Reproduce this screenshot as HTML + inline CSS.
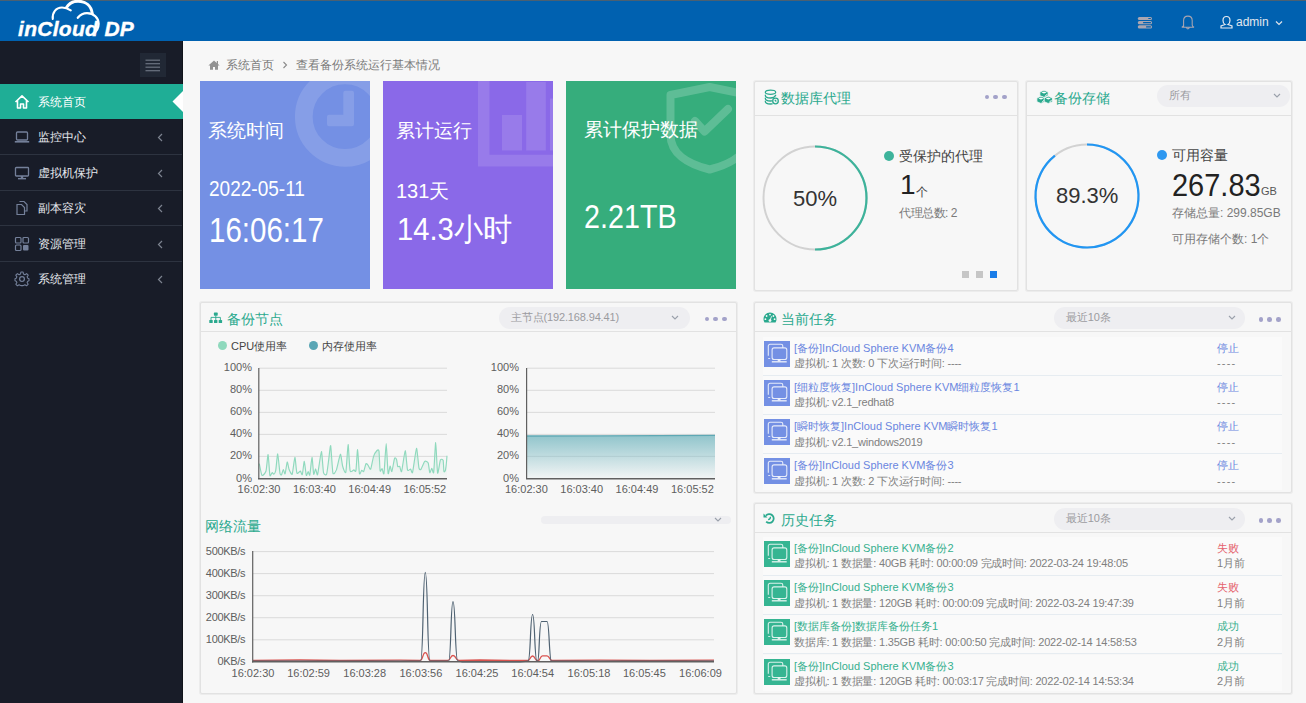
<!DOCTYPE html>
<html><head><meta charset="utf-8"><style>
*{margin:0;padding:0;box-sizing:border-box}
html,body{width:1306px;height:703px;overflow:hidden;background:#f7f7f7;font-family:"Liberation Sans",sans-serif;position:relative}
.a{position:absolute;white-space:nowrap}
.menu{position:absolute;left:0;width:182px;height:35px;color:#e4e7ec;font-size:12px;line-height:35px}
.menu .t{position:absolute;left:38px;top:1px}
.menu .ar{position:absolute;left:156px;top:1px;width:8px;height:35px}
.menu svg.ic{position:absolute;left:14px;top:10px}
.sep{position:absolute;left:0;width:182px;height:1px;background:#2d3340}
.card{position:absolute;top:81px;width:170px;height:208px;overflow:hidden;color:#fff}
.panel{position:absolute;background:#f7f7f7;border:1px solid #e2e2e2;box-shadow:0 0 0 1px #ececec;border-radius:2px}
.hsep{position:absolute;height:1px;background:#e2e2e2}
.ptitle{position:absolute;color:#2aa98e;font-size:14px;line-height:16px;white-space:nowrap}
.dot{position:absolute;width:4.6px;height:4.6px;border-radius:50%;background:#a3a2c9}
.sel{position:absolute;background:#eeeef1;border-radius:11px;color:#9a9a9a;font-size:11px}
.row{position:absolute;left:763px;width:519px;height:39px;background:#fafafa;border-bottom:1px solid #e6ecf1}
.ico{position:absolute;left:1px;width:26px;height:26px}
.rt{position:absolute;left:31px;font-size:11px;line-height:13px;white-space:nowrap}
.rs{position:absolute;left:31px;font-size:11px;line-height:13px;color:#808080;white-space:nowrap;letter-spacing:-0.2px}
.st{position:absolute;left:454px;font-size:11px;line-height:13px;white-space:nowrap}
.lbl{position:absolute;font-size:11px;color:#5e5e5e;line-height:12px;white-space:nowrap}
</style></head><body>
<div class="a" style="left:0;top:0;width:1306px;height:1px;background:#4a6072"></div>
<div class="a" style="left:0;top:1px;width:1306px;height:40px;background:#0061b0"></div>
<div class="a" style="left:18px;top:17px;font:italic bold 21px 'Liberation Sans',sans-serif;color:#fff;line-height:24px;letter-spacing:0.3px;-webkit-text-stroke:0.4px #fff">inCloud DP</div>
<svg class="a" style="left:0;top:0" width="120" height="41" viewBox="0 0 120 41">
 <path d="M52.8,19 C52,12.5 56,7.5 62,7.5 C65.5,7.5 68.5,8.8 70.8,10.3" fill="none" stroke="#fff" stroke-width="2.1" stroke-linecap="round"/>
 <path d="M66.5,7.5 C69,3.2 73,1.2 78,1.2 C85.5,1.2 91.2,5.5 92.3,13.5" fill="none" stroke="#fff" stroke-width="2.9" stroke-linecap="round"/>
 <path d="M77.8,17.8 C80.5,14.6 83.5,13.2 87,13.2 C93.8,13.2 98.6,17.8 98.6,23.8 C98.6,27.8 96.8,31 93.6,33.6" fill="none" stroke="#fff" stroke-width="2.3" stroke-linecap="round"/>
</svg>
<svg class="a" style="left:1130px;top:5px" width="160" height="35" viewBox="1130 5 160 35">
 <g fill="#aaa6b1"><rect x="1137.8" y="16.9" width="14.2" height="3.1" rx="1.5"/><rect x="1137.8" y="21.1" width="14.2" height="3.1" rx="1.5"/><rect x="1137.8" y="25.3" width="14.2" height="3.1" rx="1.5"/></g>
 <g fill="#0061b0"><rect x="1148.2" y="17.9" width="2.8" height="1.1" rx="0.5"/><rect x="1143" y="22.1" width="8" height="1.1" rx="0.5"/><rect x="1146" y="26.3" width="5" height="1.1" rx="0.5"/></g>
 <path d="M1183.6,26.8 L1183.6,20.5 C1183.6,17.6 1185.5,16.1 1187.9,16.1 C1190.3,16.1 1192.2,17.6 1192.2,20.5 L1192.2,25 C1192.2,26 1193,26.8 1194,27.3 L1181.8,27.3 C1182.8,26.8 1183.6,26 1183.6,25 Z M1186.6,27.6 A1.3,1.3 0 0 0 1189.2,27.6" fill="none" stroke="#aaa6b1" stroke-width="1.05"/>
 <path d="M1226.5,16.5 C1224,16.5 1223,18.5 1223,20.5 C1223,22.5 1224,24 1225,24.5 L1221,26 L1221,28 L1232,28 L1232,26 L1228,24.5 C1229,24 1230,22.5 1230,20.5 C1230,18.5 1229,16.5 1226.5,16.5 Z" fill="none" stroke="#e6eaf0" stroke-width="1.2"/>
 <path d="M1276,21.5 L1279,24.5 L1282,21.5" fill="none" stroke="#dfe4ea" stroke-width="1.2"/>
</svg>
<div class="a" style="left:1236px;top:15px;font-size:12px;line-height:14px;color:#e3e7ee">admin</div>
<div class="a" style="left:0;top:41px;width:182px;height:662px;background:#181c28"></div>
<div class="a" style="left:182px;top:41px;width:1px;height:662px;background:#10131a"></div>
<div class="a" style="left:140px;top:53px;width:26px;height:24px;background:#212835"></div>
<svg class="a" style="left:140px;top:53px" width="26" height="24"><g fill="#6b7381"><rect x="5.5" y="6.6" width="14.5" height="1.2"/><rect x="5.5" y="10.1" width="14.5" height="1.2"/><rect x="5.5" y="13.6" width="14.5" height="1.2"/><rect x="5.5" y="17.1" width="14.5" height="1.2"/></g></svg>
<div class="menu" style="top:84px;width:183px;background:#1fae96;color:#fff"><svg class="ic" width="16" height="16" viewBox="0 0 16 16"><path d="M1.5,8 L8,1.8 L14.5,8 M3.5,6.5 L3.5,14 L6.5,14 L6.5,10 L9.5,10 L9.5,14 L12.5,14 L12.5,6.5" fill="none" stroke="#fff" stroke-width="1.6" stroke-linejoin="round"/></svg><span class="t">系统首页</span></div>
<svg class="a" style="left:172px;top:84px" width="11" height="35"><path d="M11,7 L0.5,17.5 L11,28 Z" fill="#fff"/></svg>
<div class="menu" style="top:119px"><svg class="ic" width="16" height="16" viewBox="0 0 16 16"><rect x="2.5" y="3" width="11" height="8" rx="1" fill="none" stroke="#74809a" stroke-width="1.3"/><rect x="0.8" y="12" width="14.4" height="1.6" fill="#74809a"/></svg><span class="t">监控中心</span><svg class="ar" width="8" height="35"><path d="M6,14 L2.5,17.5 L6,21" fill="none" stroke="#7d8390" stroke-width="1.2"/></svg></div>
<div class="sep" style="top:154px"></div>
<div class="menu" style="top:155px"><svg class="ic" width="16" height="16" viewBox="0 0 16 16"><rect x="1.5" y="2.5" width="13" height="8.5" rx="0.8" fill="none" stroke="#74809a" stroke-width="1.3"/><rect x="6.8" y="11" width="2.4" height="2" fill="#74809a"/><rect x="4" y="13" width="8" height="1.4" fill="#74809a"/></svg><span class="t">虚拟机保护</span><svg class="ar" width="8" height="35"><path d="M6,14 L2.5,17.5 L6,21" fill="none" stroke="#7d8390" stroke-width="1.2"/></svg></div>
<div class="sep" style="top:190px"></div>
<div class="menu" style="top:190px"><svg class="ic" width="16" height="16" viewBox="0 0 16 16"><path d="M5.5,1.5 L10,1.5 L13,4.5 L13,11 L11,11 M3,4.5 L7.5,4.5 L10.5,7.5 L10.5,14.5 L3,14.5 Z" fill="none" stroke="#74809a" stroke-width="1.2"/></svg><span class="t">副本容灾</span><svg class="ar" width="8" height="35"><path d="M6,14 L2.5,17.5 L6,21" fill="none" stroke="#7d8390" stroke-width="1.2"/></svg></div>
<div class="sep" style="top:225px"></div>
<div class="menu" style="top:226px"><svg class="ic" width="16" height="16" viewBox="0 0 16 16"><g fill="none" stroke="#74809a" stroke-width="1.2"><rect x="1.5" y="1.5" width="5.5" height="5.5" rx="1"/><rect x="9" y="1.5" width="5.5" height="5.5" rx="1"/><rect x="1.5" y="9" width="5.5" height="5.5" rx="1"/></g><rect x="9" y="9" width="5.5" height="5.5" rx="1" fill="#74809a"/></svg><span class="t">资源管理</span><svg class="ar" width="8" height="35"><path d="M6,14 L2.5,17.5 L6,21" fill="none" stroke="#7d8390" stroke-width="1.2"/></svg></div>
<div class="sep" style="top:261px"></div>
<div class="menu" style="top:261px"><svg class="ic" width="16" height="16" viewBox="0 0 16 16"><path d="M6.9,1.2 L9.1,1.2 L9.5,3.2 L10.9,3.9 L12.6,2.8 L14.2,4.4 L13.1,6.1 L13.8,7.5 L15,7.9 L15,10.1 L13.8,10.5 L13.1,11.9 L14.2,13.6 L12.6,15.2 L10.9,14.1 L9.5,14.8 L9.1,15 L6.9,15 L6.5,14.8 L5.1,14.1 L3.4,15.2 L1.8,13.6 L2.9,11.9 L2.2,10.5 L1,10.1 L1,7.9 L2.2,7.5 L2.9,6.1 L1.8,4.4 L3.4,2.8 L5.1,3.9 L6.5,3.2 Z" transform="translate(0,-0.1) scale(1,0.98)" fill="none" stroke="#74809a" stroke-width="1.1" stroke-linejoin="round"/><circle cx="8" cy="8.1" r="2.4" fill="none" stroke="#74809a" stroke-width="1.2"/></svg><span class="t">系统管理</span><svg class="ar" width="8" height="35"><path d="M6,14 L2.5,17.5 L6,21" fill="none" stroke="#7d8390" stroke-width="1.2"/></svg></div>
<svg class="a" style="left:208px;top:60px" width="12" height="11" viewBox="0 0 12 11"><path d="M6,0.5 L8.8,3 L8.8,1 L10,1 L10,4.1 L11.6,5.6 L10,5.6 L10,9.8 L7,9.8 L7,7 L5,7 L5,9.8 L2,9.8 L2,5.6 L0.4,5.6 Z" fill="#929292"/></svg>
<div class="a" style="left:226px;top:57px;font-size:12px;line-height:16px;color:#7a7a7a">系统首页</div>
<svg class="a" style="left:281px;top:59px" width="8" height="12"><path d="M2.5,3 L5.5,6 L2.5,9" fill="none" stroke="#8a8a8a" stroke-width="1.1"/></svg>
<div class="a" style="left:296px;top:57px;font-size:12px;line-height:16px;color:#7a7a7a">查看备份系统运行基本情况</div>
<div class="card" style="left:200px;background:#7490e4">
<svg class="a" style="left:0;top:0" width="170" height="208"><circle cx="145" cy="35.7" r="41.2" fill="none" stroke="rgba(255,255,255,0.13)" stroke-width="17.7"/><path d="M145.3,9.7 L152,9.7 Q154,9.7 154,11.7 L154,43.2 Q154,45.2 152,45.2 L129,45.2 Q127,45.2 127,43.2 L127,35.8 Q127,33.8 129,33.8 L143.3,33.8 L143.3,11.7 Q143.3,9.7 145.3,9.7 Z" fill="rgba(255,255,255,0.13)"/></svg>
<div class="a" style="left:8px;top:38px;font-size:19px;line-height:24px">系统时间</div>
<div class="a" style="left:8.5px;top:95px;font-size:21.5px;line-height:26px;transform:scaleX(0.885);transform-origin:0 0">2022-05-11</div>
<div class="a" style="left:9px;top:128.5px;font-size:34.5px;line-height:40px;transform:scaleX(0.855);transform-origin:0 0">16:06:17</div>
</div>
<div class="card" style="left:383px;background:#8a69e8">
<svg class="a" style="left:0;top:0" width="170" height="208"><g fill="rgba(255,255,255,0.12)"><path d="M95,0 L106.5,0 L106.5,73.7 L170,73.7 L170,85.5 L95,85.5 Z"/><rect x="119" y="34" width="20" height="35.5"/><rect x="143.2" y="1" width="19.6" height="68.5"/><rect x="167" y="17.5" width="10" height="52"/></g></svg>
<div class="a" style="left:13px;top:38px;font-size:19px;line-height:24px">累计运行</div>
<div class="a" style="left:13px;top:98px;font-size:20px;line-height:24px">131天</div>
<div class="a" style="left:14px;top:130px;font-size:31px;line-height:38px;transform:scaleX(0.94);transform-origin:0 0">14.3小时</div>
</div>
<div class="card" style="left:566px;background:#36ad7c">
<svg class="a" style="left:0;top:0" width="170" height="208"><path d="M143.7,6 L183,14 L183,54 C183,72 166,83 143.7,88.5 C121,83 104.5,72 104.5,54 L104.5,14 Z" fill="none" stroke="rgba(255,255,255,0.2)" stroke-width="8" stroke-linejoin="round"/>
<path d="M129,40 L138.5,50.5 L162,28" fill="none" stroke="rgba(255,255,255,0.2)" stroke-width="8" stroke-linecap="round" stroke-linejoin="round"/></svg>
<div class="a" style="left:18px;top:37px;font-size:19px;line-height:24px">累计保护数据</div>
<div class="a" style="left:18px;top:116.5px;font-size:33px;line-height:38px;transform:scaleX(0.87);transform-origin:0 0">2.21TB</div>
</div>
<div class="panel" style="left:754px;top:81px;width:264px;height:210px"></div>
<div class="hsep" style="left:755px;top:115px;width:262px"></div>
<svg class="a" style="left:764px;top:89px" width="16" height="16" viewBox="0 0 16 16"><g fill="none" stroke="#2aa98e" stroke-width="1.3" stroke-linecap="round"><ellipse cx="6.5" cy="3.2" rx="5.2" ry="2.1"/><path d="M1.3,6.2 C1.3,8 3.6,9 6.5,9 C8.6,9 10.6,8.6 11.7,6.3"/><path d="M1.3,9.2 C1.3,11 3.6,12 6.5,12 L7.8,11.9"/><path d="M1.3,12.2 C1.3,14 3.6,15 6.5,15 L8.2,14.9"/><circle cx="11.5" cy="12" r="2.8"/></g><path d="M10.8,10.8 L12.3,12.5" stroke="#2aa98e" stroke-width="1.2"/></svg>
<div class="ptitle" style="left:781px;top:90px">数据库代理</div>
<div class="dot" style="left:984.6px;top:94.6px"></div>
<div class="dot" style="left:993.3px;top:94.6px"></div>
<div class="dot" style="left:1002.0px;top:94.6px"></div>
<svg class="a" style="left:754px;top:140px" width="120" height="120" viewBox="754 140 120 120">
<circle cx="815" cy="198" r="51.5" fill="none" stroke="#d2d2d2" stroke-width="2"/>
<path d="M815,146.5 A51.5,51.5 0 0 1 815,249.5" fill="none" stroke="#3db39b" stroke-width="2.2"/></svg>
<div class="a" style="left:793px;top:186px;font-size:22px;line-height:26px;color:#333">50%</div>
<div class="a" style="left:884px;top:151px;width:10px;height:10px;border-radius:50%;background:#3db39b"></div>
<div class="a" style="left:899px;top:148px;font-size:14px;line-height:16px;color:#444">受保护的代理</div>
<div class="a" style="left:900px;top:168.5px;font-size:28px;line-height:32px;color:#222">1</div>
<div class="a" style="left:916px;top:184.5px;font-size:12px;line-height:14px;color:#444">个</div>
<div class="a" style="left:899px;top:206px;font-size:12px;line-height:14px;color:#7a7a7a;letter-spacing:-0.5px">代理总数: 2</div>
<div class="a" style="left:962px;top:271px;width:7px;height:7px;background:#c6c6c6"></div>
<div class="a" style="left:976px;top:271px;width:7px;height:7px;background:#c6c6c6"></div>
<div class="a" style="left:990px;top:271px;width:7px;height:7px;background:#1a7de8"></div>
<div class="panel" style="left:1026px;top:81px;width:266px;height:210px"></div>
<div class="hsep" style="left:1027px;top:115px;width:264px"></div>
<svg class="a" style="left:1036px;top:89px" width="18" height="16" viewBox="0 0 18 16"><path d="M8,1.1999999999999997 L12.1,3.0 L12.1,6.699999999999999 L8,8.5 L3.9000000000000004,6.699999999999999 L3.9000000000000004,3.0 Z" fill="#2aa98e" stroke="#f7f7f7" stroke-width="0.8"/><path d="M8,2.4 L10.6,3.5 L8,4.6 L5.4,3.5 Z" fill="#fff"/><path d="M9,7.4 L11.2,5.1" stroke="#fff" stroke-width="1"/><path d="M5,7.200000000000001 L9.1,9.0 L9.1,12.700000000000001 L5,14.5 L0.9000000000000004,12.700000000000001 L0.9000000000000004,9.0 Z" fill="#2aa98e" stroke="#f7f7f7" stroke-width="0.8"/><path d="M5,8.4 L7.6,9.5 L5,10.600000000000001 L2.4,9.5 Z" fill="#fff"/><path d="M6,13.4 L8.2,11.100000000000001" stroke="#fff" stroke-width="1"/><path d="M12.3,7.200000000000001 L16.4,9.0 L16.4,12.700000000000001 L12.3,14.5 L8.200000000000001,12.700000000000001 L8.200000000000001,9.0 Z" fill="#2aa98e" stroke="#f7f7f7" stroke-width="0.8"/><path d="M12.3,8.4 L14.9,9.5 L12.3,10.600000000000001 L9.700000000000001,9.5 Z" fill="#fff"/><path d="M13.3,13.4 L15.5,11.100000000000001" stroke="#fff" stroke-width="1"/></svg>
<div class="ptitle" style="left:1054px;top:90px">备份存储</div>
<div class="sel" style="left:1157px;top:85px;width:133px;height:22px"></div>
<div class="a" style="left:1169px;top:89px;font-size:11px;line-height:13px;color:#9b9b9f;letter-spacing:-0.15px">所有</div>
<svg class="a" style="left:1273px;top:93.0px" width="8" height="6"><path d="M1,1 L4,4 L7,1" fill="none" stroke="#9aa0ab" stroke-width="1.1"/></svg>
<svg class="a" style="left:1026px;top:136px" width="125" height="125" viewBox="1026 136 125 125">
<circle cx="1087" cy="196" r="51.5" fill="none" stroke="#d2d2d2" stroke-width="2"/>
<path d="M1087,144.5 A51.5,51.5 0 1 1 1054.93,155.71" fill="none" stroke="#2196f3" stroke-width="2.2"/></svg>
<div class="a" style="left:1056px;top:183px;font-size:22px;line-height:26px;color:#333">89.3%</div>
<div class="a" style="left:1157px;top:150px;width:10px;height:10px;border-radius:50%;background:#2e98f0"></div>
<div class="a" style="left:1172px;top:147px;font-size:14px;line-height:16px;color:#444">可用容量</div>
<div class="a" style="left:1172px;top:168px;font-size:30.5px;line-height:34px;color:#222;transform:scaleX(0.95);transform-origin:0 0">267.83</div>
<div class="a" style="left:1261px;top:185px;font-size:11px;line-height:13px;color:#555">GB</div>
<div class="a" style="left:1172px;top:206px;font-size:12px;line-height:15px;color:#7a7a7a;letter-spacing:0px">存储总量: 299.85GB</div>
<div class="a" style="left:1172px;top:232px;font-size:12px;line-height:15px;color:#7a7a7a;letter-spacing:0px">可用存储个数: 1个</div>
<div class="panel" style="left:200px;top:302px;width:537px;height:392px"></div>
<div class="hsep" style="left:201px;top:331px;width:535px"></div>
<svg class="a" style="left:209px;top:312px" width="14" height="12" viewBox="0 0 14 12"><g fill="#2aa98e"><rect x="4.9" y="0.6" width="3.8" height="3.1" rx="0.6"/><rect x="0.3" y="8" width="3.4" height="3" rx="0.6"/><rect x="5" y="8" width="3.4" height="3" rx="0.6"/><rect x="9.7" y="8" width="3.4" height="3" rx="0.6"/></g><g fill="none" stroke="#2aa98e" stroke-width="0.9"><path d="M6.8,3.6 L6.8,8 M2,8 L2,5.4 L11.4,5.4 L11.4,8"/></g></svg>
<div class="ptitle" style="left:227px;top:311px">备份节点</div>
<div class="sel" style="left:499px;top:307px;width:191px;height:22px"></div>
<div class="a" style="left:511px;top:311px;font-size:11px;line-height:13px;color:#9b9b9f;letter-spacing:-0.15px">主节点(192.168.94.41)</div>
<svg class="a" style="left:671px;top:315.0px" width="8" height="6"><path d="M1,1 L4,4 L7,1" fill="none" stroke="#9aa0ab" stroke-width="1.1"/></svg>
<div class="dot" style="left:704.6px;top:316.6px"></div>
<div class="dot" style="left:713.3px;top:316.6px"></div>
<div class="dot" style="left:722.0px;top:316.6px"></div>
<div class="a" style="left:218px;top:341px;width:9px;height:9px;border-radius:50%;background:#8fd9bd"></div>
<div class="a" style="left:231px;top:340px;font-size:11px;line-height:13px;color:#444">CPU使用率</div>
<div class="a" style="left:309px;top:341px;width:9px;height:9px;border-radius:50%;background:#5aa6b5"></div>
<div class="a" style="left:322px;top:340px;font-size:11px;line-height:13px;color:#444">内存使用率</div>
<svg class="a" style="left:0;top:0" width="1306" height="703" viewBox="0 0 1306 703">
<defs><linearGradient id="gcpu" x1="0" y1="0" x2="0" y2="1"><stop offset="0" stop-color="#8fd9bd" stop-opacity="0.35"/><stop offset="1" stop-color="#8fd9bd" stop-opacity="0.02"/></linearGradient>
<linearGradient id="gmem" x1="0" y1="0" x2="0" y2="1"><stop offset="0" stop-color="#7fbcc4" stop-opacity="0.85"/><stop offset="1" stop-color="#7fbcc4" stop-opacity="0.05"/></linearGradient></defs>
<line x1="259" y1="456.4" x2="447" y2="456.4" stroke="#dadada" stroke-width="1"/>
<line x1="259" y1="434.4" x2="447" y2="434.4" stroke="#dadada" stroke-width="1"/>
<line x1="259" y1="412.4" x2="447" y2="412.4" stroke="#dadada" stroke-width="1"/>
<line x1="259" y1="390.3" x2="447" y2="390.3" stroke="#dadada" stroke-width="1"/>
<line x1="259" y1="368.2" x2="447" y2="368.2" stroke="#dadada" stroke-width="1"/>
<path d="M259.3,463.6 C259.6,464.8 261.3,474.7 262.0,475.4 C262.7,476.1 265.4,473.1 266.0,471.0 C266.6,468.9 267.7,454.2 268.1,454.6 C268.5,455.0 269.5,473.6 269.9,475.4 C270.3,477.2 271.8,472.7 272.2,472.6 C272.6,472.5 273.4,474.4 273.8,474.2 C274.2,474.0 275.3,472.7 275.7,470.7 C276.1,468.7 277.3,453.6 277.7,453.9 C278.1,454.2 279.6,471.3 280.0,473.4 C280.4,475.5 281.3,475.0 281.6,474.6 C281.9,474.2 282.9,469.6 283.3,469.5 C283.7,469.4 284.7,474.6 285.1,473.8 C285.5,473.1 286.8,462.5 287.2,462.0 C287.6,461.5 288.5,467.9 289.0,469.1 C289.5,470.3 291.6,475.4 292.2,474.2 C292.8,473.0 294.4,457.5 294.9,457.4 C295.4,457.3 296.3,471.6 296.9,473.0 C297.4,474.4 299.9,470.9 300.4,471.1 C300.9,471.3 301.9,475.6 302.3,474.6 C302.7,473.6 303.9,461.2 304.3,461.3 C304.7,461.4 305.9,474.4 306.3,475.4 C306.7,476.4 307.8,471.5 308.2,471.5 C308.6,471.5 309.4,476.4 309.8,475.0 C310.2,473.6 311.6,457.5 312.0,457.4 C312.4,457.3 313.3,473.1 313.7,474.2 C314.1,475.3 315.2,468.7 315.6,468.7 C316.0,468.7 317.0,476.3 317.6,474.6 C318.2,472.9 320.8,451.7 321.4,451.5 C322.0,451.3 323.0,470.3 323.5,472.6 C324.0,474.9 326.1,475.4 326.6,474.2 C327.1,473.0 328.2,463.4 328.6,460.5 C329.0,457.6 330.3,444.4 330.7,445.6 C331.1,446.9 332.3,470.6 332.9,473.0 C333.5,475.4 335.6,471.8 336.4,469.9 C337.1,468.0 339.8,454.7 340.4,454.3 C341.0,453.9 342.1,464.2 342.6,466.0 C343.1,467.8 345.2,474.4 345.8,472.3 C346.4,470.2 347.7,444.7 348.1,444.5 C348.5,444.3 349.5,468.2 350.1,470.7 C350.7,473.2 353.3,469.9 353.9,469.9 C354.5,469.9 355.5,472.7 355.9,470.7 C356.3,468.7 357.2,449.3 357.6,449.6 C358.0,449.9 359.0,471.3 359.4,473.4 C359.8,475.5 361.3,470.5 361.7,470.3 C362.1,470.1 363.3,472.2 363.7,471.5 C364.1,470.8 365.6,464.2 366.0,463.6 C366.4,463.0 367.5,464.6 368.0,465.2 C368.5,465.8 370.1,470.0 370.7,469.1 C371.2,468.2 372.9,458.5 373.5,456.6 C374.1,454.7 376.4,451.1 377.0,450.5 C377.6,449.9 378.7,449.1 379.0,451.1 C379.3,453.1 379.8,468.9 380.1,470.7 C380.4,472.5 381.7,468.4 382.1,468.7 C382.5,469.0 383.6,475.9 384.0,473.4 C384.4,470.9 385.8,443.7 386.2,443.7 C386.6,443.7 387.7,471.2 388.1,473.4 C388.5,475.6 389.7,466.2 390.1,466.0 C390.5,465.8 391.4,472.3 391.9,471.5 C392.3,470.7 394.1,459.4 394.6,458.2 C395.1,457.0 396.3,458.9 396.6,459.7 C396.9,460.5 397.4,465.7 397.7,466.4 C398.0,467.1 399.3,465.9 399.7,466.4 C400.1,466.9 401.1,473.1 401.6,471.5 C402.2,469.9 404.6,450.9 405.2,450.7 C405.8,450.5 407.0,468.1 407.5,469.9 C408.0,471.7 410.1,468.9 410.6,469.1 C411.1,469.3 412.0,474.4 412.6,472.3 C413.2,470.2 415.9,448.9 416.5,448.4 C417.1,447.9 418.5,465.5 418.9,467.6 C419.3,469.7 420.2,470.1 420.8,469.5 C421.4,468.9 424.0,462.0 424.7,461.3 C425.4,460.6 427.7,461.8 428.2,462.9 C428.7,464.0 429.4,472.1 429.8,472.6 C430.2,473.1 431.4,468.3 431.8,468.3 C432.2,468.3 433.3,474.9 433.7,472.3 C434.1,469.7 435.3,442.4 435.7,442.5 C436.1,442.6 437.1,471.2 437.6,473.0 C438.1,474.8 439.8,461.4 440.4,460.1 C440.9,458.8 442.8,459.2 443.1,460.3 C443.5,461.4 443.7,470.5 443.9,471.5 C444.1,472.5 445.2,471.5 445.5,469.9 C445.8,468.3 446.9,457.2 447.0,455.8 L447,478 L259.3,478 Z" fill="url(#gcpu)"/>
<path d="M259.3,463.6 C259.6,464.8 261.3,474.7 262.0,475.4 C262.7,476.1 265.4,473.1 266.0,471.0 C266.6,468.9 267.7,454.2 268.1,454.6 C268.5,455.0 269.5,473.6 269.9,475.4 C270.3,477.2 271.8,472.7 272.2,472.6 C272.6,472.5 273.4,474.4 273.8,474.2 C274.2,474.0 275.3,472.7 275.7,470.7 C276.1,468.7 277.3,453.6 277.7,453.9 C278.1,454.2 279.6,471.3 280.0,473.4 C280.4,475.5 281.3,475.0 281.6,474.6 C281.9,474.2 282.9,469.6 283.3,469.5 C283.7,469.4 284.7,474.6 285.1,473.8 C285.5,473.1 286.8,462.5 287.2,462.0 C287.6,461.5 288.5,467.9 289.0,469.1 C289.5,470.3 291.6,475.4 292.2,474.2 C292.8,473.0 294.4,457.5 294.9,457.4 C295.4,457.3 296.3,471.6 296.9,473.0 C297.4,474.4 299.9,470.9 300.4,471.1 C300.9,471.3 301.9,475.6 302.3,474.6 C302.7,473.6 303.9,461.2 304.3,461.3 C304.7,461.4 305.9,474.4 306.3,475.4 C306.7,476.4 307.8,471.5 308.2,471.5 C308.6,471.5 309.4,476.4 309.8,475.0 C310.2,473.6 311.6,457.5 312.0,457.4 C312.4,457.3 313.3,473.1 313.7,474.2 C314.1,475.3 315.2,468.7 315.6,468.7 C316.0,468.7 317.0,476.3 317.6,474.6 C318.2,472.9 320.8,451.7 321.4,451.5 C322.0,451.3 323.0,470.3 323.5,472.6 C324.0,474.9 326.1,475.4 326.6,474.2 C327.1,473.0 328.2,463.4 328.6,460.5 C329.0,457.6 330.3,444.4 330.7,445.6 C331.1,446.9 332.3,470.6 332.9,473.0 C333.5,475.4 335.6,471.8 336.4,469.9 C337.1,468.0 339.8,454.7 340.4,454.3 C341.0,453.9 342.1,464.2 342.6,466.0 C343.1,467.8 345.2,474.4 345.8,472.3 C346.4,470.2 347.7,444.7 348.1,444.5 C348.5,444.3 349.5,468.2 350.1,470.7 C350.7,473.2 353.3,469.9 353.9,469.9 C354.5,469.9 355.5,472.7 355.9,470.7 C356.3,468.7 357.2,449.3 357.6,449.6 C358.0,449.9 359.0,471.3 359.4,473.4 C359.8,475.5 361.3,470.5 361.7,470.3 C362.1,470.1 363.3,472.2 363.7,471.5 C364.1,470.8 365.6,464.2 366.0,463.6 C366.4,463.0 367.5,464.6 368.0,465.2 C368.5,465.8 370.1,470.0 370.7,469.1 C371.2,468.2 372.9,458.5 373.5,456.6 C374.1,454.7 376.4,451.1 377.0,450.5 C377.6,449.9 378.7,449.1 379.0,451.1 C379.3,453.1 379.8,468.9 380.1,470.7 C380.4,472.5 381.7,468.4 382.1,468.7 C382.5,469.0 383.6,475.9 384.0,473.4 C384.4,470.9 385.8,443.7 386.2,443.7 C386.6,443.7 387.7,471.2 388.1,473.4 C388.5,475.6 389.7,466.2 390.1,466.0 C390.5,465.8 391.4,472.3 391.9,471.5 C392.3,470.7 394.1,459.4 394.6,458.2 C395.1,457.0 396.3,458.9 396.6,459.7 C396.9,460.5 397.4,465.7 397.7,466.4 C398.0,467.1 399.3,465.9 399.7,466.4 C400.1,466.9 401.1,473.1 401.6,471.5 C402.2,469.9 404.6,450.9 405.2,450.7 C405.8,450.5 407.0,468.1 407.5,469.9 C408.0,471.7 410.1,468.9 410.6,469.1 C411.1,469.3 412.0,474.4 412.6,472.3 C413.2,470.2 415.9,448.9 416.5,448.4 C417.1,447.9 418.5,465.5 418.9,467.6 C419.3,469.7 420.2,470.1 420.8,469.5 C421.4,468.9 424.0,462.0 424.7,461.3 C425.4,460.6 427.7,461.8 428.2,462.9 C428.7,464.0 429.4,472.1 429.8,472.6 C430.2,473.1 431.4,468.3 431.8,468.3 C432.2,468.3 433.3,474.9 433.7,472.3 C434.1,469.7 435.3,442.4 435.7,442.5 C436.1,442.6 437.1,471.2 437.6,473.0 C438.1,474.8 439.8,461.4 440.4,460.1 C440.9,458.8 442.8,459.2 443.1,460.3 C443.5,461.4 443.7,470.5 443.9,471.5 C444.1,472.5 445.2,471.5 445.5,469.9 C445.8,468.3 446.9,457.2 447.0,455.8" fill="none" stroke="#8fd9bd" stroke-width="1.15"/>
<line x1="258.8" y1="368" x2="258.8" y2="479" stroke="#606060" stroke-width="1.2"/>
<line x1="258" y1="478.7" x2="447" y2="478.7" stroke="#606060" stroke-width="1.4"/>
<line x1="527" y1="456.4" x2="715" y2="456.4" stroke="#dadada" stroke-width="1"/>
<line x1="527" y1="434.4" x2="715" y2="434.4" stroke="#dadada" stroke-width="1"/>
<line x1="527" y1="412.4" x2="715" y2="412.4" stroke="#dadada" stroke-width="1"/>
<line x1="527" y1="390.3" x2="715" y2="390.3" stroke="#dadada" stroke-width="1"/>
<line x1="527" y1="368.2" x2="715" y2="368.2" stroke="#dadada" stroke-width="1"/>
<path d="M527,436 L600,435.8 L715,435.4 L715,478 L527,478 Z" fill="url(#gmem)"/>
<path d="M527,436 L600,435.8 L715,435.4" fill="none" stroke="#5ea8b4" stroke-width="1.3"/>
<line x1="526.6" y1="368" x2="526.6" y2="479" stroke="#606060" stroke-width="1.2"/>
<line x1="526" y1="478.7" x2="715" y2="478.7" stroke="#606060" stroke-width="1.4"/>
<line x1="253" y1="639.8" x2="714" y2="639.8" stroke="#dadada" stroke-width="1"/>
<line x1="253" y1="617.7" x2="714" y2="617.7" stroke="#dadada" stroke-width="1"/>
<line x1="253" y1="595.7" x2="714" y2="595.7" stroke="#dadada" stroke-width="1"/>
<line x1="253" y1="573.6" x2="714" y2="573.6" stroke="#dadada" stroke-width="1"/>
<line x1="253" y1="551.6" x2="714" y2="551.6" stroke="#dadada" stroke-width="1"/>
<path d="M253,660.4 L300,660 L340,660.5 L400,660.2 L420,660.5 C423.2,660.5 422.4,652.6 425.3,652.6 C428.2,652.6 427.4,660.5 430.5,660.5 L447.5,660.5 C450.8,660.5 450.0,655.5 453,655.5 C456.3,655.5 455.4,660.5 459,660.5 L480,660 L520,660.4 L527.5,660.5 C530.6,660.5 529.8,656 532.6,656 C535.3,656 534.6,660.5 537.5,660.5 L538,660.5 C540.5,660.5 540,655.8 542.5,655.8 L547,655.8 C549.5,655.8 549.5,660.5 552,660.5 L600,660.1 L650,660.5 L714,660.2" fill="none" stroke="#d9534f" stroke-width="1.3"/>
<path d="M253,661.2 L420.6,661.2 C423.4,661.2 422.7,572.4 425.3,572.4 C427.9,572.4 427.2,661.2 430,661.2 L448.6,661.2 C451.2,661.2 450.6,601.6 453,601.6 C455.6,601.6 454.9,661.2 457.8,661.2 C459.5,661 461,662 464,662 L520,661.8 L528,661.2 C530.8,661.2 530.1,614.5 532.6,614.5 C535.0,614.5 534.4,661.2 537,661.2 L537.6,661.2 C539.5,661.2 539,621.5 541.5,621.5 L547,621.5 C549.5,621.5 549,661.2 551.5,661.2 L714,661.2" fill="none" stroke="#4f6272" stroke-width="1.2"/>
<line x1="252.7" y1="551" x2="252.7" y2="662.5" stroke="#606060" stroke-width="1.2"/>
<line x1="252" y1="661.8" x2="714" y2="661.8" stroke="#606060" stroke-width="1.4"/>
</svg>
<div class="lbl" style="left:192px;width:60px;text-align:right;top:471.5px;letter-spacing:0px">0%</div>
<div class="lbl" style="left:192px;width:60px;text-align:right;top:449.45px;letter-spacing:0px">20%</div>
<div class="lbl" style="left:192px;width:60px;text-align:right;top:427.4px;letter-spacing:0px">40%</div>
<div class="lbl" style="left:192px;width:60px;text-align:right;top:405.35px;letter-spacing:0px">60%</div>
<div class="lbl" style="left:192px;width:60px;text-align:right;top:383.3px;letter-spacing:0px">80%</div>
<div class="lbl" style="left:192px;width:60px;text-align:right;top:361.25px;letter-spacing:0px">100%</div>
<div class="lbl" style="left:229px;width:60px;text-align:center;top:483px">16:02:30</div>
<div class="lbl" style="left:284.5px;width:60px;text-align:center;top:483px">16:03:40</div>
<div class="lbl" style="left:339.7px;width:60px;text-align:center;top:483px">16:04:49</div>
<div class="lbl" style="left:394.8px;width:60px;text-align:center;top:483px">16:05:52</div>
<div class="lbl" style="left:459px;width:60px;text-align:right;top:471.5px;letter-spacing:0px">0%</div>
<div class="lbl" style="left:459px;width:60px;text-align:right;top:449.45px;letter-spacing:0px">20%</div>
<div class="lbl" style="left:459px;width:60px;text-align:right;top:427.4px;letter-spacing:0px">40%</div>
<div class="lbl" style="left:459px;width:60px;text-align:right;top:405.35px;letter-spacing:0px">60%</div>
<div class="lbl" style="left:459px;width:60px;text-align:right;top:383.3px;letter-spacing:0px">80%</div>
<div class="lbl" style="left:459px;width:60px;text-align:right;top:361.25px;letter-spacing:0px">100%</div>
<div class="lbl" style="left:496.4px;width:60px;text-align:center;top:483px">16:02:30</div>
<div class="lbl" style="left:551.7px;width:60px;text-align:center;top:483px">16:03:40</div>
<div class="lbl" style="left:607px;width:60px;text-align:center;top:483px">16:04:49</div>
<div class="lbl" style="left:662.4px;width:60px;text-align:center;top:483px">16:05:52</div>
<div class="ptitle" style="left:205px;top:518px">网络流量</div>
<div class="sel" style="left:541px;top:516px;width:190px;height:8px"></div>
<svg class="a" style="left:714px;top:517.0px" width="8" height="6"><path d="M1,1 L4,4 L7,1" fill="none" stroke="#9aa0ab" stroke-width="1.1"/></svg>
<div class="lbl" style="left:185.3px;width:60px;text-align:right;top:654.8px;letter-spacing:-0.3px">0KB/s</div>
<div class="lbl" style="left:185.3px;width:60px;text-align:right;top:632.76px;letter-spacing:-0.3px">100KB/s</div>
<div class="lbl" style="left:185.3px;width:60px;text-align:right;top:610.7199999999999px;letter-spacing:-0.3px">200KB/s</div>
<div class="lbl" style="left:185.3px;width:60px;text-align:right;top:588.68px;letter-spacing:-0.3px">300KB/s</div>
<div class="lbl" style="left:185.3px;width:60px;text-align:right;top:566.64px;letter-spacing:-0.3px">400KB/s</div>
<div class="lbl" style="left:185.3px;width:60px;text-align:right;top:544.5999999999999px;letter-spacing:-0.3px">500KB/s</div>
<div class="lbl" style="left:223px;width:60px;text-align:center;top:667px">16:02:30</div>
<div class="lbl" style="left:278.6px;width:60px;text-align:center;top:667px">16:02:59</div>
<div class="lbl" style="left:334.7px;width:60px;text-align:center;top:667px">16:03:28</div>
<div class="lbl" style="left:390.9px;width:60px;text-align:center;top:667px">16:03:56</div>
<div class="lbl" style="left:447px;width:60px;text-align:center;top:667px">16:04:25</div>
<div class="lbl" style="left:502.70000000000005px;width:60px;text-align:center;top:667px">16:04:54</div>
<div class="lbl" style="left:559px;width:60px;text-align:center;top:667px">16:05:18</div>
<div class="lbl" style="left:614.4px;width:60px;text-align:center;top:667px">16:05:45</div>
<div class="lbl" style="left:670.5px;width:60px;text-align:center;top:667px">16:06:09</div>
<div class="panel" style="left:754px;top:301.5px;width:538px;height:191px"></div>
<div class="hsep" style="left:755px;top:331px;width:536px"></div>
<svg class="a" style="left:763px;top:312px" width="14" height="11" viewBox="0 0 14 11"><path d="M7,0.5 C3.2,0.5 0.5,3.5 0.5,7 C0.5,8.5 1,9.7 1.5,10.5 L12.5,10.5 C13,9.7 13.5,8.5 13.5,7 C13.5,3.5 10.8,0.5 7,0.5 Z" fill="#2aa98e"/><g fill="#f7f7f7"><circle cx="7" cy="2.6" r="0.9"/><circle cx="3.6" cy="4" r="0.9"/><circle cx="10.4" cy="4" r="0.9"/><circle cx="2.4" cy="7.2" r="0.9"/><circle cx="11.6" cy="7.2" r="0.9"/><circle cx="7" cy="8.6" r="1.4"/><path d="M6.5,8.5 L8.3,4 L8.9,4.2 L7.5,8.8 Z"/></g></svg>
<div class="ptitle" style="left:781px;top:311.0px">当前任务</div>
<div class="sel" style="left:1054px;top:307.0px;width:191px;height:22px"></div>
<div class="a" style="left:1066px;top:311.0px;font-size:11px;line-height:13px;color:#9b9b9f;letter-spacing:-0.15px">最近10条</div>
<svg class="a" style="left:1227.5px;top:315.0px" width="8" height="6"><path d="M1,1 L4,4 L7,1" fill="none" stroke="#9aa0ab" stroke-width="1.1"/></svg>
<div class="dot" style="left:1258.6px;top:317.1px"></div>
<div class="dot" style="left:1267.3px;top:317.1px"></div>
<div class="dot" style="left:1276.0px;top:317.1px"></div>
<div class="row" style="top:336.5px;border-bottom:1px solid #e6ecf1;"><svg class="ico" style="top:4px;background:#7490e4" width="26" height="26" viewBox="0 0 26 26"><g fill="none" stroke="rgba(255,255,255,0.82)" stroke-width="1.1"><path d="M4.3,14.8 L4.3,5 C4.3,4 5,3.3 6,3.3 L17,3.3 C18,3.3 18.8,4 18.8,5 L18.8,6.8"/><rect x="8.1" y="6.9" width="14.7" height="11.6" rx="2"/></g><rect x="13.7" y="18.5" width="2.8" height="1.8" fill="rgba(255,255,255,0.82)"/><rect x="7.8" y="20.1" width="14.9" height="1.4" fill="rgba(255,255,255,0.82)"/><rect x="4.2" y="17.1" width="2" height="0.9" fill="rgba(255,255,255,0.82)"/></svg><div class="rt" style="top:5px;color:#6a86e0">[备份]InCloud Sphere KVM备份4</div><div class="rs" style="top:20.5px">虚拟机: 1 次数: 0 下次运行时间: ----</div><div class="st" style="top:5px;color:#6a86e0">停止</div><div class="st" style="top:20.5px;color:#808080;letter-spacing:1.2px">----</div></div>
<div class="row" style="top:375.8px;border-bottom:1px solid #e6ecf1;"><svg class="ico" style="top:4px;background:#7490e4" width="26" height="26" viewBox="0 0 26 26"><g fill="none" stroke="rgba(255,255,255,0.82)" stroke-width="1.1"><path d="M4.3,14.8 L4.3,5 C4.3,4 5,3.3 6,3.3 L17,3.3 C18,3.3 18.8,4 18.8,5 L18.8,6.8"/><rect x="8.1" y="6.9" width="14.7" height="11.6" rx="2"/></g><rect x="13.7" y="18.5" width="2.8" height="1.8" fill="rgba(255,255,255,0.82)"/><rect x="7.8" y="20.1" width="14.9" height="1.4" fill="rgba(255,255,255,0.82)"/><rect x="4.2" y="17.1" width="2" height="0.9" fill="rgba(255,255,255,0.82)"/></svg><div class="rt" style="top:5px;color:#6a86e0">[细粒度恢复]InCloud Sphere KVM细粒度恢复1</div><div class="rs" style="top:20.5px">虚拟机: v2.1_redhat8</div><div class="st" style="top:5px;color:#6a86e0">停止</div><div class="st" style="top:20.5px;color:#808080;letter-spacing:1.2px">----</div></div>
<div class="row" style="top:415.1px;border-bottom:1px solid #e6ecf1;"><svg class="ico" style="top:4px;background:#7490e4" width="26" height="26" viewBox="0 0 26 26"><g fill="none" stroke="rgba(255,255,255,0.82)" stroke-width="1.1"><path d="M4.3,14.8 L4.3,5 C4.3,4 5,3.3 6,3.3 L17,3.3 C18,3.3 18.8,4 18.8,5 L18.8,6.8"/><rect x="8.1" y="6.9" width="14.7" height="11.6" rx="2"/></g><rect x="13.7" y="18.5" width="2.8" height="1.8" fill="rgba(255,255,255,0.82)"/><rect x="7.8" y="20.1" width="14.9" height="1.4" fill="rgba(255,255,255,0.82)"/><rect x="4.2" y="17.1" width="2" height="0.9" fill="rgba(255,255,255,0.82)"/></svg><div class="rt" style="top:5px;color:#6a86e0">[瞬时恢复]InCloud Sphere KVM瞬时恢复1</div><div class="rs" style="top:20.5px">虚拟机: v2.1_windows2019</div><div class="st" style="top:5px;color:#6a86e0">停止</div><div class="st" style="top:20.5px;color:#808080;letter-spacing:1.2px">----</div></div>
<div class="row" style="top:454.4px;border-bottom:none;height:36px;"><svg class="ico" style="top:4px;background:#7490e4" width="26" height="26" viewBox="0 0 26 26"><g fill="none" stroke="rgba(255,255,255,0.82)" stroke-width="1.1"><path d="M4.3,14.8 L4.3,5 C4.3,4 5,3.3 6,3.3 L17,3.3 C18,3.3 18.8,4 18.8,5 L18.8,6.8"/><rect x="8.1" y="6.9" width="14.7" height="11.6" rx="2"/></g><rect x="13.7" y="18.5" width="2.8" height="1.8" fill="rgba(255,255,255,0.82)"/><rect x="7.8" y="20.1" width="14.9" height="1.4" fill="rgba(255,255,255,0.82)"/><rect x="4.2" y="17.1" width="2" height="0.9" fill="rgba(255,255,255,0.82)"/></svg><div class="rt" style="top:5px;color:#6a86e0">[备份]InCloud Sphere KVM备份3</div><div class="rs" style="top:20.5px">虚拟机: 1 次数: 2 下次运行时间: ----</div><div class="st" style="top:5px;color:#6a86e0">停止</div><div class="st" style="top:20.5px;color:#808080;letter-spacing:1.2px">----</div></div>
<div class="panel" style="left:754px;top:502.5px;width:538px;height:191px"></div>
<div class="hsep" style="left:755px;top:532px;width:536px"></div>
<svg class="a" style="left:763px;top:512px" width="13" height="13" viewBox="0 0 13 13"><path d="M2.93,3.67 A4.4,4.4 0 1 1 3.19,9.61" fill="none" stroke="#2aa98e" stroke-width="1.8"/><path d="M0.5,1.6 L0.5,5.6 L4.5,5.6 Z" fill="#2aa98e"/><path d="M7.5,4.7 C7.5,6.4 6.9,7.4 5.1,7.6" fill="none" stroke="#2aa98e" stroke-width="1.3"/></svg>
<div class="ptitle" style="left:781px;top:512.0px">历史任务</div>
<div class="sel" style="left:1054px;top:508.0px;width:191px;height:22px"></div>
<div class="a" style="left:1066px;top:512.0px;font-size:11px;line-height:13px;color:#9b9b9f;letter-spacing:-0.15px">最近10条</div>
<svg class="a" style="left:1227.5px;top:516.0px" width="8" height="6"><path d="M1,1 L4,4 L7,1" fill="none" stroke="#9aa0ab" stroke-width="1.1"/></svg>
<div class="dot" style="left:1258.6px;top:518.1px"></div>
<div class="dot" style="left:1267.3px;top:518.1px"></div>
<div class="dot" style="left:1276.0px;top:518.1px"></div>
<div class="row" style="top:536.8px;border-bottom:1px solid #e6ecf1;"><svg class="ico" style="top:4px;background:#36b592" width="26" height="26" viewBox="0 0 26 26"><g fill="none" stroke="rgba(255,255,255,0.82)" stroke-width="1.1"><path d="M4.3,14.8 L4.3,5 C4.3,4 5,3.3 6,3.3 L17,3.3 C18,3.3 18.8,4 18.8,5 L18.8,6.8"/><rect x="8.1" y="6.9" width="14.7" height="11.6" rx="2"/></g><rect x="13.7" y="18.5" width="2.8" height="1.8" fill="rgba(255,255,255,0.82)"/><rect x="7.8" y="20.1" width="14.9" height="1.4" fill="rgba(255,255,255,0.82)"/><rect x="4.2" y="17.1" width="2" height="0.9" fill="rgba(255,255,255,0.82)"/></svg><div class="rt" style="top:5px;color:#36b08f">[备份]InCloud Sphere KVM备份2</div><div class="rs" style="top:20.5px">虚拟机: 1 数据量: 40GB 耗时: 00:00:09 完成时间: 2022-03-24 19:48:05</div><div class="st" style="top:5px;color:#e5646e">失败</div><div class="st" style="top:20.5px;color:#808080;letter-spacing:0px">1月前</div></div>
<div class="row" style="top:576.1px;border-bottom:1px solid #e6ecf1;"><svg class="ico" style="top:4px;background:#36b592" width="26" height="26" viewBox="0 0 26 26"><g fill="none" stroke="rgba(255,255,255,0.82)" stroke-width="1.1"><path d="M4.3,14.8 L4.3,5 C4.3,4 5,3.3 6,3.3 L17,3.3 C18,3.3 18.8,4 18.8,5 L18.8,6.8"/><rect x="8.1" y="6.9" width="14.7" height="11.6" rx="2"/></g><rect x="13.7" y="18.5" width="2.8" height="1.8" fill="rgba(255,255,255,0.82)"/><rect x="7.8" y="20.1" width="14.9" height="1.4" fill="rgba(255,255,255,0.82)"/><rect x="4.2" y="17.1" width="2" height="0.9" fill="rgba(255,255,255,0.82)"/></svg><div class="rt" style="top:5px;color:#36b08f">[备份]InCloud Sphere KVM备份3</div><div class="rs" style="top:20.5px">虚拟机: 1 数据量: 120GB 耗时: 00:00:09 完成时间: 2022-03-24 19:47:39</div><div class="st" style="top:5px;color:#e5646e">失败</div><div class="st" style="top:20.5px;color:#808080;letter-spacing:0px">1月前</div></div>
<div class="row" style="top:615.4px;border-bottom:1px solid #e6ecf1;"><svg class="ico" style="top:4px;background:#36b592" width="26" height="26" viewBox="0 0 26 26"><g fill="none" stroke="rgba(255,255,255,0.82)" stroke-width="1.1"><path d="M4.3,14.8 L4.3,5 C4.3,4 5,3.3 6,3.3 L17,3.3 C18,3.3 18.8,4 18.8,5 L18.8,6.8"/><rect x="8.1" y="6.9" width="14.7" height="11.6" rx="2"/></g><rect x="13.7" y="18.5" width="2.8" height="1.8" fill="rgba(255,255,255,0.82)"/><rect x="7.8" y="20.1" width="14.9" height="1.4" fill="rgba(255,255,255,0.82)"/><rect x="4.2" y="17.1" width="2" height="0.9" fill="rgba(255,255,255,0.82)"/></svg><div class="rt" style="top:5px;color:#36b08f">[数据库备份]数据库备份任务1</div><div class="rs" style="top:20.5px">数据库: 1 数据量: 1.35GB 耗时: 00:00:50 完成时间: 2022-02-14 14:58:53</div><div class="st" style="top:5px;color:#36b08f">成功</div><div class="st" style="top:20.5px;color:#808080;letter-spacing:0px">2月前</div></div>
<div class="row" style="top:654.7px;border-bottom:none;height:36px;"><svg class="ico" style="top:4px;background:#36b592" width="26" height="26" viewBox="0 0 26 26"><g fill="none" stroke="rgba(255,255,255,0.82)" stroke-width="1.1"><path d="M4.3,14.8 L4.3,5 C4.3,4 5,3.3 6,3.3 L17,3.3 C18,3.3 18.8,4 18.8,5 L18.8,6.8"/><rect x="8.1" y="6.9" width="14.7" height="11.6" rx="2"/></g><rect x="13.7" y="18.5" width="2.8" height="1.8" fill="rgba(255,255,255,0.82)"/><rect x="7.8" y="20.1" width="14.9" height="1.4" fill="rgba(255,255,255,0.82)"/><rect x="4.2" y="17.1" width="2" height="0.9" fill="rgba(255,255,255,0.82)"/></svg><div class="rt" style="top:5px;color:#36b08f">[备份]InCloud Sphere KVM备份3</div><div class="rs" style="top:20.5px">虚拟机: 1 数据量: 120GB 耗时: 00:03:17 完成时间: 2022-02-14 14:53:34</div><div class="st" style="top:5px;color:#36b08f">成功</div><div class="st" style="top:20.5px;color:#808080;letter-spacing:0px">2月前</div></div>
</body></html>
